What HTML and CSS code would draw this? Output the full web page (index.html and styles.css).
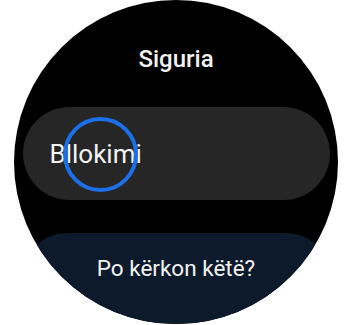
FILE: index.html
```html
<!DOCTYPE html>
<html>
<head>
<meta charset="utf-8">
<link rel="stylesheet" href="styles.css">
</head>
<body>
<div class="watch">
  <div class="screen">
    <h1 class="title">Siguria</h1>
    <div class="item">Bllokimi</div>
    <div class="suggest">Po kërkon këtë?</div>
  </div>
</div>
<div class="touch"></div>
</body>
</html>
```
FILE: styles.css
```css
html, body {
  margin: 0;
  padding: 0;
  background: #ffffff;
}
body {
  width: 353px;
  height: 325px;
  position: relative;
  overflow: hidden;
  font-family: Roboto, "Liberation Sans", sans-serif;
}
.watch {
  margin-left: 14px;
  width: 324px;
  height: 324px;
  border-radius: 50%;
  background: #000000;
  overflow: hidden;
}
.screen {
  display: flex;
  flex-direction: column;
  align-items: center;
  padding-top: 45px;
}
.title {
  margin: 0;
  font-size: 24px;
  line-height: 29px;
  font-weight: 500;
  color: #f2f2f2;
}
.item {
  margin-top: 33px;
  width: 307px;
  height: 93px;
  box-sizing: border-box;
  border-radius: 47px;
  background: #262626;
  color: #f4f4f4;
  font-size: 26px;
  display: flex;
  align-items: center;
  padding-left: 27px;
}
.suggest {
  margin-top: 33px;
  width: 307px;
  height: 120px;
  box-sizing: border-box;
  border-radius: 44px 44px 0 0;
  background: #0d1a2b;
  color: #f2f2f2;
  font-size: 22.5px;
  line-height: 26px;
  text-align: center;
  padding-top: 22px;
}
.touch {
  position: absolute;
  left: 63px;
  top: 117px;
  width: 67px;
  height: 67px;
  border: 4px solid #1b6fe9;
  border-radius: 50%;
}
```
